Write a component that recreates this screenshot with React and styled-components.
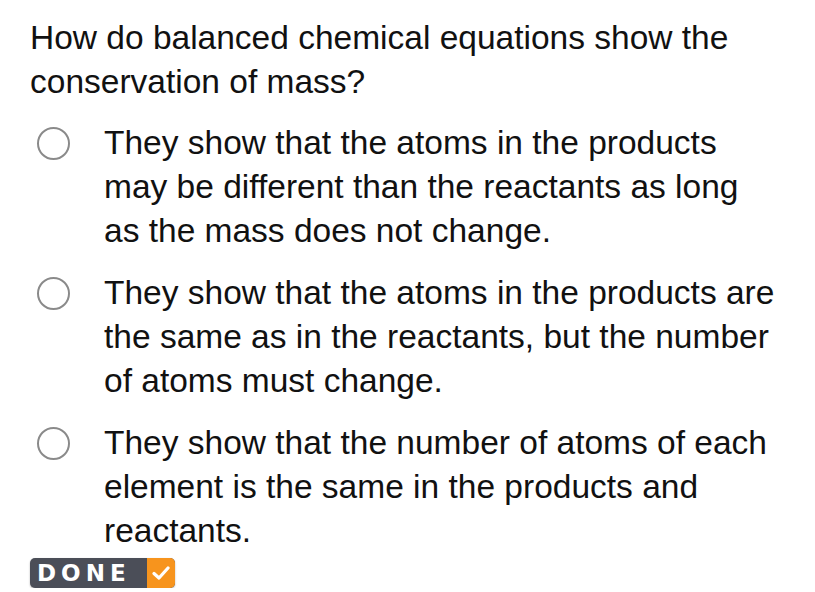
import styled, { createGlobalStyle } from "styled-components";

const Global = createGlobalStyle`
  body {
    margin: 0;
    background: #fff;
    font-family: "Liberation Sans", Arial, sans-serif;
    color: #111;
  }
`

const Page = styled.div`
  padding: 16px 0 0 30px;
  width: 785px;
`
const Question = styled.p`
  margin: 0;
  font-size: 33.5px;
  line-height: 44px;
  width: 740px;
`
const Options = styled.div`
  display: flex;
  flex-direction: column;
  gap: 18px;
  margin-top: 17px;
`
const Option = styled.label`
  display: flex;
  align-items: flex-start;
  cursor: pointer;
`
const Radio = styled.span`
  flex: none;
  width: 29px;
  height: 29px;
  border: 2.5px solid #8a8a8a;
  border-radius: 50%;
  margin: 6px 0 0 7px;
`
const OptionText = styled.span`
  margin-left: 34px;
  font-size: 33.5px;
  line-height: 44px;
  width: 674px;
`
const Done = styled.button`
  display: flex;
  align-items: stretch;
  margin-top: 5px;
  padding: 0;
  border: none;
  border-radius: 5px;
  overflow: hidden;
  height: 30px;
  width: 145px;
  background: #4b4e58;
  box-shadow: 0 1px 2px rgba(0,0,0,0.3);
`
const DoneLabel = styled.span`
  flex: 1;
  display: flex;
  align-items: center;
  padding-left: 7px;
  color: #fff;
  font-family: "DejaVu Sans", "Liberation Sans", sans-serif;
  font-weight: bold;
  font-size: 23px;
  letter-spacing: 5px;
`
const Check = styled.span`
  display: flex;
  align-items: center;
  justify-content: center;
  width: 28px;
  background: #f7941d;
`

const options = [
  "They show that the atoms in the products may be different than the reactants as long as the mass does not change.",
  "They show that the atoms in the products are the same as in the reactants, but the number of atoms must change.",
  "They show that the number of atoms of each element is the same in the products and reactants.",
];

export default function App() {
  return (
    <Page>
      <Global />
      <Question>How do balanced chemical equations show the conservation of mass?</Question>
      <Options>
        {options.map((text) => (
          <Option key={text}>
            <Radio />
            <OptionText>{text}</OptionText>
          </Option>
        ))}
      </Options>
      <Done>
        <DoneLabel>DONE</DoneLabel>
        <Check>
          <svg width="18" height="16" viewBox="0 0 18 16">
            <path d="M2 8.5 L7 13 L16 3" fill="none" stroke="#fff" strokeWidth="3.2" strokeLinecap="round" strokeLinejoin="round" />
          </svg>
        </Check>
      </Done>
    </Page>
  );
}
